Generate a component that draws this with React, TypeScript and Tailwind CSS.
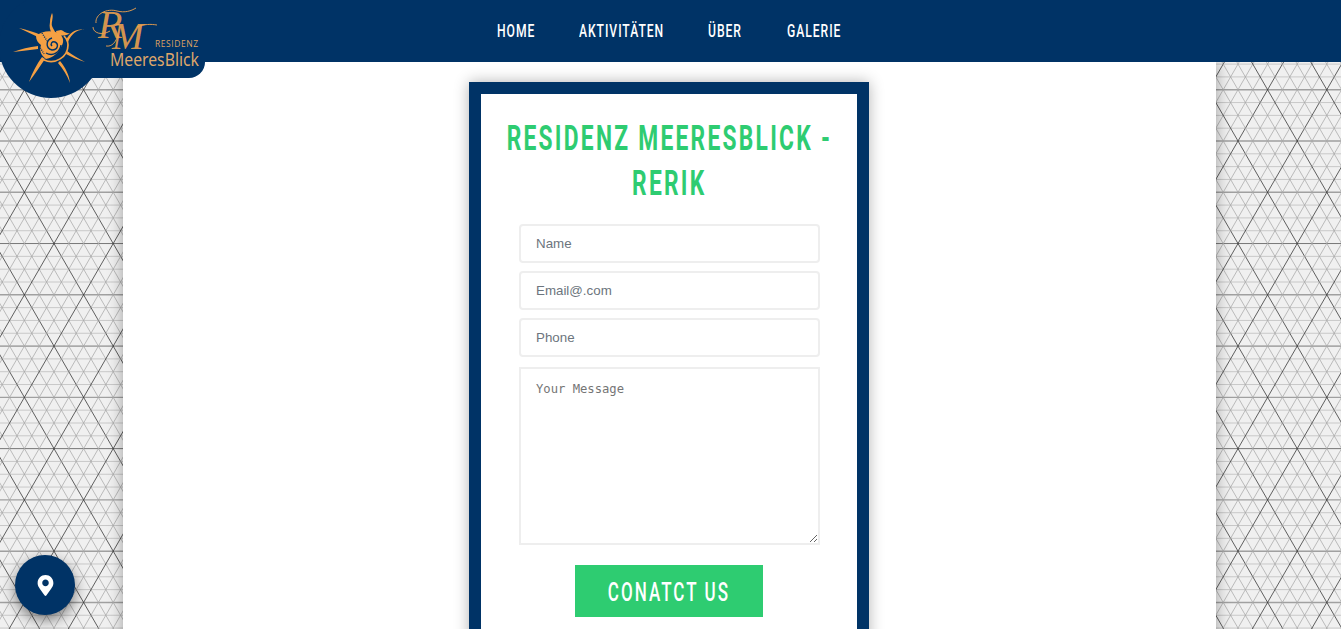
import { FaMapMarkerAlt } from "react-icons/fa";

const SIDE = 14.8;
const ROW = 12.8175;
const SLOPE = Math.sqrt(3);
const diagonals = Array.from({ length: 141 }, (_, i) => i - 30);
const rows = Array.from({ length: 50 }, (_, i) => i - 11);

function TrianglePattern() {
  return (
    <svg className="absolute inset-0 h-full w-full" aria-hidden="true">
      {rows.map((i) => {
        const y = 141 + i * ROW;
        const mod = ((i % 8) + 8) % 8;
        return (
          <line
            key={i}
            x1={0}
            x2={1341}
            y1={y}
            y2={y}
            stroke={mod === 0 ? "#777" : mod === 4 ? "#a0a0a0" : "#c8c8c8"}
            strokeWidth={mod === 4 ? 1.4 : 1}
          />
        );
      })}
      {diagonals.map((k) => {
        const x = 54 + k * SIDE;
        const big = k % 4 === 0;
        const dTop = 141 / SLOPE;
        const dBottom = 488 / SLOPE;
        return (
          <g key={k} stroke={big ? "#3a3a3a" : "#a8a8a8"} strokeWidth={big ? 0.8 : 0.75}>
            <line x1={x - dTop} y1={0} x2={x + dBottom} y2={629} />
            <line x1={x + dTop} y1={0} x2={x - dBottom} y2={629} />
          </g>
        );
      })}
    </svg>
  );
}

function Logo() {
  return (
    <div className="absolute left-0 top-0 z-20">
      <svg width="230" height="100" viewBox="0 0 230 100">
        <circle cx="51" cy="46" r="52" fill="#003366" />
        <path d="M60 0H205V62A16 16 0 0 1 189 78H60Z" fill="#003366" />
        <g fill="#f5a043">
          <path d="M52 13C54 17 51 22 52 26C53 29 55 31 56 34L52 34C50 30 49 27 50 22C50 18 51 16 52 13Z" />
          <path d="M19 28C27 30 35 32 41 35L40 38C33 35 26 31 19 28Z" />
          <path d="M13 52C21 49 29 47 38 46L38 49C30 50 22 51 13 52Z" />
          <path d="M29 82C32 73 37 64 42 57L45 59C40 66 35 74 29 82Z" />
          <path d="M70 83C67 75 63 69 58 63L60 61C65 67 69 74 70 83Z" />
          <path d="M85 62C78 60 72 57 66 54L67 51C72 55 78 58 85 62Z" />
          <path d="M85 30C78 29 72 33 68 42L66 40C70 32 77 28 85 30Z" />
          <path d="M70 33C66 34 64 31 61 30L56 31L57 35C61 36 67 36 70 33Z" />
          <path d="M36 36C42 30 54 30 60 34C64 38 64 43 61 47C58 53 54 57 46 59C41 55 39 51 41 45C38 43 36 40 36 36Z" />
        </g>
        <g fill="none" stroke="#003366" strokeWidth="1.4">
          <path d="M52 38C46 40 45 48 52 50C58 50 59 44 55 42C52 41 50 44 52 46" />
          <path d="M46 53C53 57 60 52 61 45" />
          <path d="M42 33L47 41M38 44L44 54" strokeDasharray="1 1.2" />
        </g>
        <g fill="none" stroke="#f5a043" strokeWidth="1.7">
          <path d="M44 60C55 65 68 57 68 45C68 41 66 38 64 36" />
        </g>
        <g fill="none" stroke="#f0a24c" strokeWidth="0.9">
          <path d="M96 23C95 14 107 8 117 11C125 13 131 11 136 8" />
          <path d="M110 31C102 36 93 33 93 27" />
          <path d="M106 46C112 47 116 42 118 35" />
          <path d="M137 27C144 24 151 24 157 25" />
        </g>
        <text x="98" y="38" fontFamily="Liberation Serif, serif" fontStyle="italic" fontSize="40" fill="#f0a24c" fillOpacity="0.9">R</text>
        <text x="112" y="49" fontFamily="Liberation Serif, serif" fontStyle="italic" fontSize="38" fill="#f0a24c" fillOpacity="0.9">M</text>
        <text x="155" y="47" fontFamily="Open Sans, sans-serif" fontSize="8.5" fill="#dfa262" textLength="43">RESIDENZ</text>
        <text x="110" y="66" fontFamily="Noto Sans, sans-serif" fontSize="18" fill="#dfa66a" textLength="89" lengthAdjust="spacingAndGlyphs">MeeresBlick</text>
      </svg>
    </div>
  );
}

const fieldClass =
  "block h-[39px] w-full rounded border-2 border-[#eeeeee] bg-white px-[15px] font-['Liberation_Sans',sans-serif] text-[13.333px] placeholder:text-[#6c757d]";

const navItems = [
  { label: "Home", width: "w-[38px]" },
  { label: "Aktivitäten", width: "w-[85px]" },
  { label: "Über", width: "w-[35px]" },
  { label: "Galerie", width: "w-[55px]" },
];

export default function App() {
  return (
    <div className="relative h-screen overflow-hidden bg-[#f0f0f0] font-['Roboto',sans-serif]">
      <TrianglePattern />
      <Logo />

      <header className="relative z-10 flex h-[62px] items-center gap-[44px] bg-[#003366] pb-[2px] pl-[497px]">
        {navItems.map((item) => (
          <a key={item.label} href="#" className={`${item.width} block text-[18px] font-medium uppercase tracking-[1.4px] text-white`}>
            <span className="inline-block origin-left scale-x-[0.675] whitespace-nowrap">{item.label}</span>
          </a>
        ))}
      </header>

      <main className="relative ml-[123px] h-[700px] w-[1093px] bg-white pl-[346px] pt-[20px] shadow-[0_0_14px_rgba(0,0,0,0.35)]">
        <div className="w-[400px] border-[12px] border-[#003366] bg-white pb-[40px] pl-[38px] pr-[37px] pt-[22px] shadow-[0_0_14px_rgba(0,0,0,0.3)]">
          <h1 className="flex flex-col items-center text-[35px] font-bold uppercase leading-[45px] tracking-[3.5px] text-[#2ecc71]">
            <span className="scale-x-[0.65] whitespace-nowrap">Residenz Meeresblick -</span>
            <span className="scale-x-[0.65] whitespace-nowrap">Rerik</span>
          </h1>
          <form className="mt-[18px] flex flex-col">
            <input className={fieldClass} placeholder="Name" />
            <input className={`${fieldClass} mt-2`} placeholder="Email@.com" />
            <input className={`${fieldClass} mt-2`} placeholder="Phone" />
            <textarea
              className="mt-[10px] block h-[178px] w-full border-2 border-[#eeeeee] bg-white px-[15px] py-[11px] font-['DejaVu_Sans_Mono',monospace] text-[12.2px] placeholder:text-[#757575]"
              placeholder="Your Message"
            />
            <button
              type="button"
              className="ml-[56px] mt-5 flex h-[52px] w-[188px] items-center justify-center bg-[#2ecc71] pt-[4px] text-[25px] font-medium uppercase tracking-[3px] text-white"
            >
              <span className="scale-x-[0.68] whitespace-nowrap">Conatct Us</span>
            </button>
          </form>
        </div>
      </main>

      <button
        type="button"
        aria-label="Standort"
        className="absolute bottom-[14px] left-[15px] z-20 flex h-[60px] w-[60px] items-center justify-center rounded-full bg-[#003366] text-[21px] text-white shadow-[0_5px_14px_rgba(0,0,0,0.5)]"
      >
        <FaMapMarkerAlt />
      </button>
    </div>
  );
}
